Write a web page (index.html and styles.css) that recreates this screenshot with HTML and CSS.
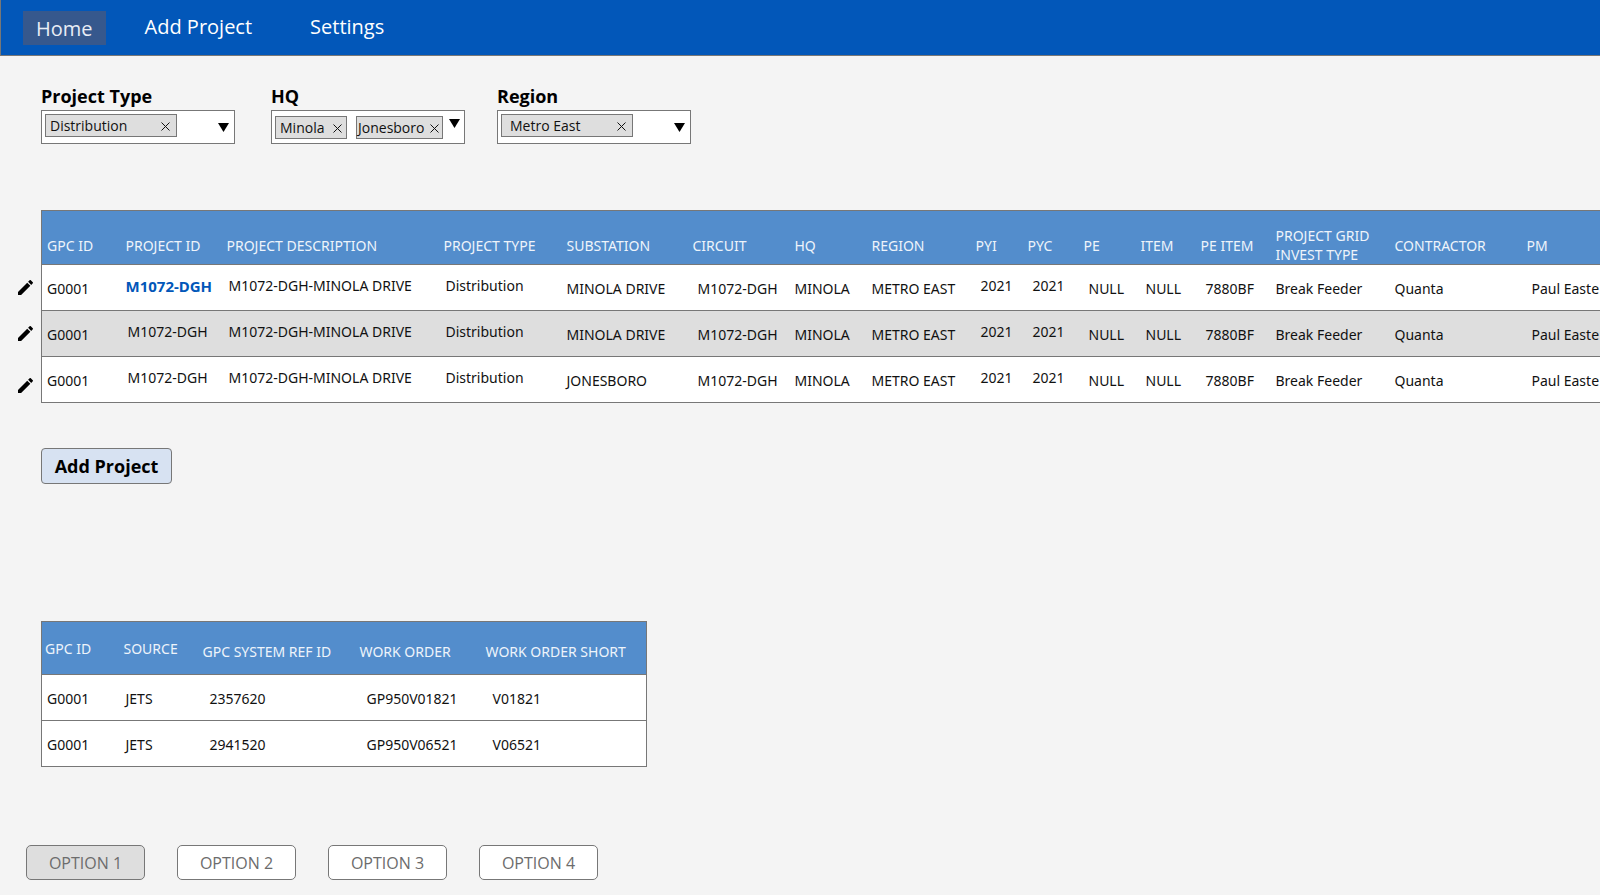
FILE: index.html
```
<!DOCTYPE html>
<html lang="en">
<head>
<meta charset="utf-8">
<title>Projects</title>
<link rel="stylesheet" href="styles.css">
</head>
<body>
<svg class="defs" aria-hidden="true">
  <symbol id="pencil" viewBox="3 3 18 18"><path d="M3 17.25V21h3.75L17.81 9.94l-3.75-3.75L3 17.25zM20.71 7.04a1 1 0 0 0 0-1.41l-2.34-2.34a1 1 0 0 0-1.41 0l-1.83 1.83 3.75 3.75 1.83-1.83z"/></symbol>
  <symbol id="cross" viewBox="0 0 9 9"><path d="M.5.5l8 8M8.500.5l-8 8" fill="none" stroke="currentColor"/></symbol>
  <symbol id="arrow" viewBox="0 0 11 9"><path d="M0 0h11L5.500 9z"/></symbol>
</svg>

<nav class="nav">
  <a class="nav-link active" href="#">Home</a>
  <a class="nav-link" href="#">Add Project</a>
  <a class="nav-link" href="#">Settings</a>
</nav>

<main>
  <section class="filters">
    <div class="field">
      <label for="type">Project Type</label>
      <div class="box">
        <span class="chip wide">Distribution<button aria-label="Remove Distribution"><svg><use href="#cross"/></svg></button></span>
        <button class="open" id="type"><svg><use href="#arrow"/></svg></button>
      </div>
    </div>
    <div class="field">
      <label for="hq">HQ</label>
      <div class="box double">
        <span class="chip">Minola<button aria-label="Remove Minola"><svg><use href="#cross"/></svg></button></span>
        <span class="chip tight">Jonesboro<button aria-label="Remove Jonesboro"><svg><use href="#cross"/></svg></button></span>
        <button class="open" id="hq"><svg><use href="#arrow"/></svg></button>
      </div>
    </div>
    <div class="field">
      <label for="region">Region</label>
      <div class="box">
        <span class="chip wide inset">Metro East<button aria-label="Remove Metro East"><svg><use href="#cross"/></svg></button></span>
        <button class="open" id="region"><svg><use href="#arrow"/></svg></button>
      </div>
    </div>
  </section>

  <section class="projects">
    <div class="edits">
      <button aria-label="Edit row 1"><svg><use href="#pencil"/></svg></button>
      <button aria-label="Edit row 2"><svg><use href="#pencil"/></svg></button>
      <button aria-label="Edit row 3"><svg><use href="#pencil"/></svg></button>
    </div>
    <table class="grid main-grid">
      <colgroup><col class="w79"><col class="w101"><col class="w217"><col class="w123"><col class="w126"><col class="w102"><col class="w77"><col class="w104"><col class="w52"><col class="w56"><col class="w57"><col class="w60"><col class="w75"><col class="w119"><col class="w132"><col></colgroup>
      <thead>
        <tr><th>GPC ID</th><th>PROJECT ID</th><th>PROJECT DESCRIPTION</th><th>PROJECT TYPE</th><th>SUBSTATION</th><th>CIRCUIT</th><th>HQ</th><th>REGION</th><th>PYI</th><th>PYC</th><th>PE</th><th>ITEM</th><th>PE ITEM</th><th>PROJECT GRID<br>INVEST TYPE</th><th>CONTRACTOR</th><th>PM</th></tr>
      </thead>
      <tbody>
        <tr><td>G0001</td><td class="up"><a href="#">M1072-DGH</a></td><td class="up">M1072-DGH-MINOLA DRIVE</td><td class="up">Distribution</td><td>MINOLA DRIVE</td><td class="in">M1072-DGH</td><td>MINOLA</td><td>METRO EAST</td><td class="up in">2021</td><td class="up in">2021</td><td class="in">NULL</td><td class="in">NULL</td><td class="in">7880BF</td><td>Break Feeder</td><td>Quanta</td><td class="in">Paul Easte</td></tr>
        <tr class="alt"><td>G0001</td><td class="up">M1072-DGH</td><td class="up">M1072-DGH-MINOLA DRIVE</td><td class="up">Distribution</td><td>MINOLA DRIVE</td><td class="in">M1072-DGH</td><td>MINOLA</td><td>METRO EAST</td><td class="up in">2021</td><td class="up in">2021</td><td class="in">NULL</td><td class="in">NULL</td><td class="in">7880BF</td><td>Break Feeder</td><td>Quanta</td><td class="in">Paul Easte</td></tr>
        <tr><td>G0001</td><td class="up">M1072-DGH</td><td class="up">M1072-DGH-MINOLA DRIVE</td><td class="up">Distribution</td><td>JONESBORO</td><td class="in">M1072-DGH</td><td>MINOLA</td><td>METRO EAST</td><td class="up in">2021</td><td class="up in">2021</td><td class="in">NULL</td><td class="in">NULL</td><td class="in">7880BF</td><td>Break Feeder</td><td>Quanta</td><td class="in">Paul Easte</td></tr>
      </tbody>
    </table>
  </section>

  <button class="add">Add Project</button>

  <table class="grid orders">
    <colgroup><col class="w79"><col class="w79"><col class="w157"><col class="w126"><col></colgroup>
    <thead>
      <tr><th>GPC ID</th><th>SOURCE</th><th class="down">GPC SYSTEM REF ID</th><th class="down">WORK ORDER</th><th class="down">WORK ORDER SHORT</th></tr>
    </thead>
    <tbody>
      <tr><td>G0001</td><td>JETS</td><td class="in">2357620</td><td class="in">GP950V01821</td><td class="in">V01821</td></tr>
      <tr><td>G0001</td><td>JETS</td><td class="in">2941520</td><td class="in">GP950V06521</td><td class="in">V06521</td></tr>
    </tbody>
  </table>

  <div class="options">
    <button class="option selected">OPTION 1</button>
    <button class="option">OPTION 2</button>
    <button class="option">OPTION 3</button>
    <button class="option">OPTION 4</button>
  </div>
</main>
</body>
</html>
```

FILE: styles.css
```
* { box-sizing: border-box; }
body {
  margin: 0;
  background: #f4f4f4;
  color: #111;
  font: 14px/20px "Open Sans", "Noto Sans", sans-serif;
  overflow-x: hidden;
}
button { font: inherit; color: inherit; cursor: pointer; }
svg { display: block; }
.defs { position: absolute; width: 0; height: 0; }

.nav {
  display: flex;
  align-items: flex-start;
  gap: 26px;
  height: 56px;
  padding: 11px 22px;
  background: #0257b9;
  border: solid #777;
  border-width: 0 0 1px 1px;
  font-size: 20px;
}
.nav-link {
  padding: 0 13px;
  line-height: 32px;
  color: #fff;
  text-decoration: none;
}
.nav-link + .nav-link + .nav-link { margin-left: 6px; }
.nav-link.active { padding-top: 1px; line-height: 33px; background: #36588d; color: #e9edf5; }

.filters {
  display: grid;
  grid-template-columns: 230px 226px 194px;
  padding: 28px 0 0 41px;
}
.field { display: grid; grid-template-rows: 26px 34px; }
.field label { font-size: 18px; line-height: 24px; font-weight: 700; color: #000; }
.box {
  display: flex;
  align-items: flex-start;
  width: 194px;
  padding: 3px;
  background: #fff;
  border: 1px solid #777;
}
.chip {
  display: flex;
  align-items: center;
  justify-content: space-between;
  width: 72px;
  height: 23px;
  padding: 0 4px;
  background: #dedede;
  border: 1px solid #777;
}
.chip.wide { width: 132px; padding: 0 6px 0 4px; }
.chip.wide.inset { padding-left: 8px; }
.chip.tight { width: 87px; padding: 0 3px 0 1px; margin-left: 9px; }
.chip button, .open { padding: 0; border: 0; background: none; }
.chip button { margin-top: 2px; }
.chip svg { width: 9px; height: 9px; }
.open { margin: 9px 2px 0 auto; }
.open svg { width: 11px; height: 9px; }
.double { padding-top: 5px; }
.double .open { margin-top: 3px; margin-right: 1px; }

.projects { display: flex; margin-top: 66px; }
.edits {
  flex: none;
  display: grid;
  grid-template-rows: 46px 46px 58px;
  width: 41px;
  padding: 54px 0 0 18px;
  height: 0;
}
.edits button { align-self: center; width: 16px; padding: 0; border: 0; background: none; color: #000; }
.edits svg { width: 15px; height: 15px; }

.grid { border-collapse: collapse; table-layout: fixed; background: #fff; font-family: "Noto Sans", "Open Sans", sans-serif; }
.grid th, .grid td { padding: 2px 0 0 5px; text-align: left; white-space: nowrap; }
.grid th { height: 53px; font-weight: 400; color: #eef4fb; }
.grid td { height: 46px; }
.grid thead { background: #538dcc; }
.grid tr { border: 1px solid #777; }
.grid .alt { background: #dedede; }
.grid .up { padding: 0 0 3px 7px; }
.grid .in { padding-left: 10px; }
.grid td a { margin-left: -2px; color: #0257b9; font-size: 15px; font-weight: 700; text-decoration: none; }
.main-grid { flex: 1; min-width: 0; width: 100%; }
.main-grid tr { border-right: 0; }
.main-grid th { padding-top: 15px; line-height: 19px; }
.w52 { width: 52px; }
.w56 { width: 56px; }
.w57 { width: 57px; }
.w60 { width: 60px; }
.w75 { width: 75px; }
.w77 { width: 77px; }
.w79 { width: 79px; }
.w101 { width: 101px; }
.w102 { width: 102px; }
.w104 { width: 104px; }
.w119 { width: 119px; }
.w123 { width: 123px; }
.w126 { width: 126px; }
.w132 { width: 132px; }
.w157 { width: 157px; }
.w217 { width: 217px; }

.add {
  display: block;
  width: 131px;
  height: 36px;
  margin: 45px 0 0 41px;
  padding: 0;
  background: #d7e2f2;
  border: 1px solid #777;
  border-radius: 4px;
  font-size: 18px;
  font-weight: 700;
  color: #000;
}

.orders { width: 606px; margin: 137px 0 0 41px; }
.orders th { padding: 2px 0 0 3px; }
.orders th.down { padding-top: 7px; }

.options { display: flex; gap: 32px; padding: 78px 0 0 26px; }
.option {
  width: 119px;
  height: 35px;
  padding: 1px 0 0;
  background: #fff;
  border: 1px solid #777;
  border-radius: 5px;
  font-size: 16px;
  color: #6c6c6c;
}
.option.selected { background: #dedede; }
```
